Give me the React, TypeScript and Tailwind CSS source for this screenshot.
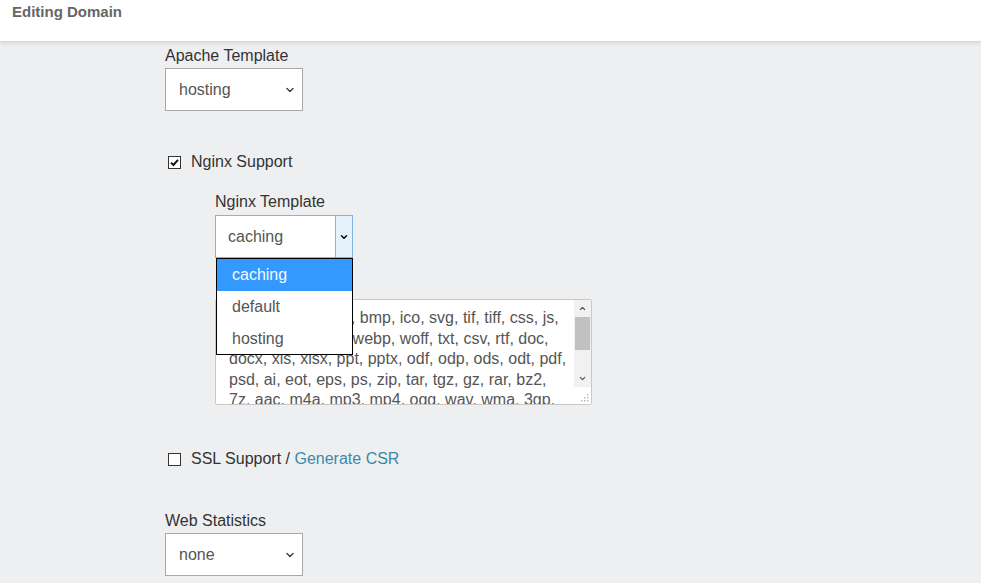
import { ChevronDown, ChevronUp } from "lucide-react";

const font = { fontFamily: '"Liberation Sans", Arial, sans-serif' };

const extensions =
  "jpeg, jpg, png, gif, bmp, ico, svg, tif, tiff, css, js, htm, html, ttf, otf, webp, woff, txt, csv, rtf, doc, docx, xls, xlsx, ppt, pptx, odf, odp, ods, odt, pdf, psd, ai, eot, eps, ps, zip, tar, tgz, gz, rar, bz2, 7z, aac, m4a, mp3, mp4, ogg, wav, wma, 3gp, avi, flv, m4v, mkv, mov, mpeg, mpg, wmv, exe, iso, dmg, swf";

function Checkbox({ checked }: { checked?: boolean }) {
  return (
    <span className="w-[13px] h-[13px] ml-[3px] border border-[#333] bg-white flex items-center justify-center shrink-0">
      {checked && (
        <svg width="9" height="9" viewBox="0 0 9 9">
          <path d="M1 4.6 L3.4 7 L8 1.8" fill="none" stroke="#111" strokeWidth="1.9" />
        </svg>
      )}
    </span>
  );
}

function PlainSelect({ value }: { value: string }) {
  return (
    <div className="w-[138px] h-[43px] bg-white border border-[#a9a9a9] flex items-center pl-[13px] pr-[6px] text-[16px] text-[#555]">
      <span className="flex-1">{value}</span>
      <ChevronDown className="w-[12px] h-[12px] text-[#444]" strokeWidth={3} />
    </div>
  );
}

export default function App() {
  return (
    <div className="w-[981px] h-[583px] bg-[#eeeff1] overflow-hidden" style={font}>
      {/* Header */}
      <div className="h-[41px] bg-white shadow-[0_2px_4px_rgba(0,0,0,0.12)] pl-[12px] pt-0 relative z-10">
        <span className="text-[15px] font-bold text-[#666] leading-[22px]">Editing Domain</span>
      </div>

      <div className="pl-[165px] pt-[5px] text-[16px] text-[#333]">
        <div className="leading-[20px]">Apache Template</div>
        <div className="mt-[2px]">
          <PlainSelect value="hosting" />
        </div>

        <div className="mt-[41px] flex items-center gap-[10px] h-[20px]">
          <Checkbox checked />
          <span>Nginx Support</span>
        </div>

        {/* Nginx block */}
        <div className="pl-[50px] mt-[20px]">
          <div className="leading-[20px]">Nginx Template</div>
          <div className="mt-[3px] relative w-[138px]">
            <div className="h-[43px] bg-white border border-[#7eb4ea] flex text-[16px] text-[#555]">
              <span className="flex-1 flex items-center pl-[12px]">caching</span>
              <span className="w-[17px] bg-[#e5f1fb] border-l border-[#7eb4ea] flex items-center justify-center">
                <ChevronDown className="w-[10px] h-[10px] text-black" strokeWidth={3.5} />
              </span>
            </div>
            {/* open dropdown list */}
            <div className="absolute left-[1px] top-[43px] w-[137px] border border-black bg-white z-20 text-[16px]">
              <div className="h-[32px] flex items-center pl-[15px] bg-[#3399ff] text-[#f4f9ff]">caching</div>
              <div className="h-[32px] flex items-center pl-[15px] text-[#555]">default</div>
              <div className="h-[31px] flex items-center pl-[15px] text-[#555]">hosting</div>
            </div>
          </div>

          {/* Extensions textarea */}
          <div className="mt-[41px] w-[377px] h-[106px] bg-white border border-[#c8c8c8] rounded-[2px] flex overflow-hidden">
            <div className="flex-1 overflow-hidden pl-[13px] pr-[6px] pt-[8px] text-[16px] leading-[20.5px] text-[#555]">
              {extensions}
            </div>
            <div className="w-[17px] flex flex-col bg-[#f1f1f1]">
              <div className="h-[17px] flex items-center justify-center">
                <ChevronUp className="w-[9px] h-[9px] text-[#505050]" strokeWidth={3} />
              </div>
              <div className="h-[33px] mx-[1px] bg-[#c1c1c1]" />
              <div className="flex-1" />
              <div className="h-[17px] flex items-center justify-center">
                <ChevronDown className="w-[9px] h-[9px] text-[#505050]" strokeWidth={3} />
              </div>
              <div className="h-[17px] bg-white flex items-end justify-end p-[2px]">
                <svg width="9" height="9" viewBox="0 0 9 9">
                  <g fill="#bbb">
                    <rect x="7" y="1" width="1.5" height="1.5" />
                    <rect x="4" y="4" width="1.5" height="1.5" />
                    <rect x="7" y="4" width="1.5" height="1.5" />
                    <rect x="1" y="7" width="1.5" height="1.5" />
                    <rect x="4" y="7" width="1.5" height="1.5" />
                    <rect x="7" y="7" width="1.5" height="1.5" />
                  </g>
                </svg>
              </div>
            </div>
          </div>
        </div>

        <div className="mt-[44px] flex items-center gap-[10px] h-[20px]">
          <Checkbox />
          <span>
            SSL Support / <a className="text-[#3a8aa8]">Generate CSR</a>
          </span>
        </div>

        <div className="mt-[42px] leading-[20px]">Web Statistics</div>
        <div className="mt-[2px]">
          <PlainSelect value="none" />
        </div>
      </div>
    </div>
  );
}
